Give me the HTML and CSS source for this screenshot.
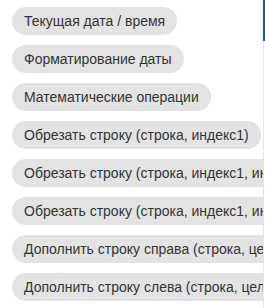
FILE: index.html
```html
<!DOCTYPE html>
<html lang="ru">
<head>
<meta charset="utf-8">
<link rel="stylesheet" href="styles.css">
</head>
<body>
<div class="frame">
  <div class="list">
    <div class="chip">Текущая дата / время</div>
    <div class="chip">Форматирование даты</div>
    <div class="chip">Математические операции</div>
    <div class="chip">Обрезать строку (строка, индекс1)</div>
    <div class="chip">Обрезать строку (строка, индекс1, индекс2)</div>
    <div class="chip">Обрезать строку (строка, индекс1, индекс2, длина)</div>
    <div class="chip">Дополнить строку справа (строка, целое, символ)</div>
    <div class="chip">Дополнить строку слева (строка, целое, символ)</div>
  </div>
  <div class="track"><div class="thumb"></div></div>
</div>
</body>
</html>
```

FILE: styles.css
```css
html, body {
  margin: 0;
  padding: 0;
  background: #ffffff;
}
.frame {
  display: flex;
  width: 265px;
  height: 308px;
  overflow: hidden;
}
.list {
  flex: 1;
  min-width: 0;
  overflow: hidden;
  display: flex;
  flex-direction: column;
  align-items: flex-start;
  gap: 10px;
  padding: 7px 0 0 12px;
}
.chip {
  flex: none;
  height: 28px;
  line-height: 28px;
  padding: 0 12px;
  border-radius: 14px;
  background: #e3e3e3;
  color: #333333;
  font-family: "Liberation Sans", Arial, sans-serif;
  font-size: 14px;
  white-space: nowrap;
}
.track {
  flex: none;
  width: 2px;
  background: linear-gradient(to right, #e6e6e6 1px, #ffffff 1px);
}
.thumb {
  width: 2px;
  height: 41px;
  background: #1b5e8c;
}
```
